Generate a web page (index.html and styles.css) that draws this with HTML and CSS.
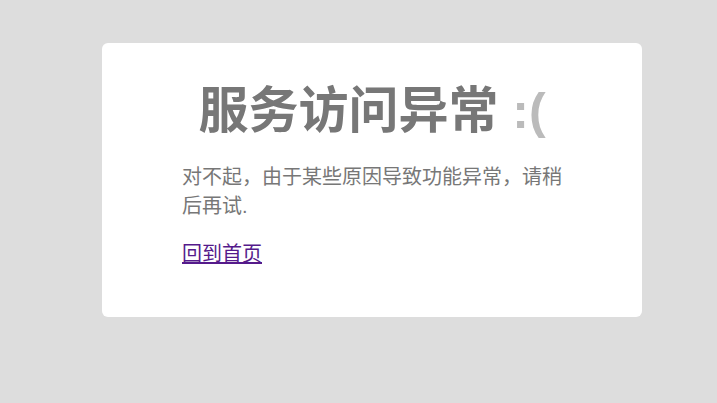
FILE: index.html
```html
<!DOCTYPE html>
<html lang="zh-CN">
<head>
  <meta charset="UTF-8">
  <meta name="viewport" content="width=device-width, initial-scale=1.0">
  <title>服务访问异常</title>
  <link rel="stylesheet" href="styles.css">
</head>
<body>
  <div class="error-box">
    <div class="error-content">
      <h1>服务访问异常 <span class="face">:(</span></h1>
      <p>对不起，由于某些原因导致功能异常，请稍后再试.</p>
      <a href="/">回到首页</a>
    </div>
  </div>
</body>
</html>
```

FILE: styles.css
```css
body {
  margin: 0;
  background: #dddddd;
  font-family: "Liberation Sans", "Noto Sans CJK SC", sans-serif;
}

.error-box {
  width: 540px;
  height: 274px;
  margin: 43px 0 0 102px;
  background: #fff;
  border-radius: 6px;
  box-sizing: border-box;
  padding-top: 28px;
}

.error-content {
  width: 380px;
  margin: 0 auto;
}

h1 {
  margin: 0;
  text-align: center;
  font-size: 50px;
  line-height: 80px;
  font-weight: bold;
  color: #777;
}

.face {
  color: #bbb;
}

p {
  margin: 12px 0 20px;
  font-size: 20px;
  line-height: 29px;
  color: #777;
}

a {
  font-size: 20px;
  line-height: 27px;
  color: #551a8b;
}
```
